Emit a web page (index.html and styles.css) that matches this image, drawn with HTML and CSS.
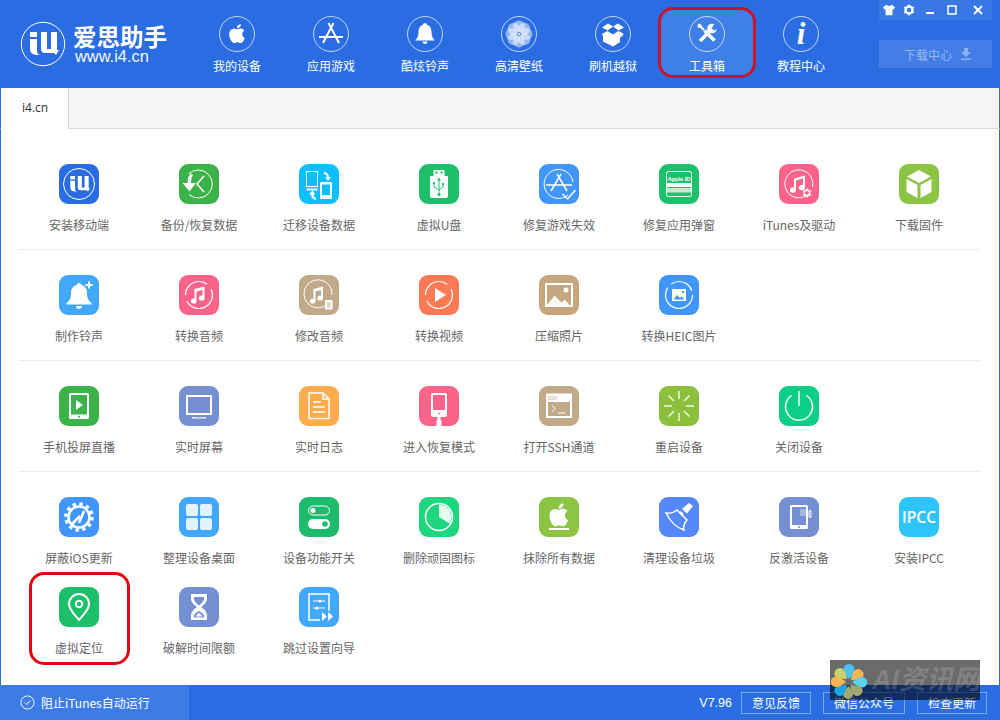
FILE: index.html
```html
<!DOCTYPE html>
<html lang="zh-CN">
<head>
<meta charset="utf-8">
<title>爱思助手</title>
<link rel="stylesheet" href="styles.css">
</head>
<body>
<div class="app">
  <header class="header">
    <div class="brand">
      <svg class="brand-logo" viewBox="0 0 46 46"><circle class="s logo-ring" cx="23" cy="23" r="21.700"/><path class="f" d="M10 11h7v5h-7zM10 18h7v12q0 3 3 4h-4q-6-1-6-6zM21 11h6v17h4V11h6v18h2l-3 5-2-2H25q-4 0-4-4z"/></svg>
      <div class="brand-text">
        <div class="brand-name">爱思助手</div>
        <div class="brand-url">www.i4.cn</div>
      </div>
    </div>
    <nav class="nav">
      <div class="nav-item">
        <svg class="nav-icon" viewBox="0 0 36 36"><circle class="ring" cx="18" cy="18" r="17.500"/><path class="f" transform="translate(6.500 6) scale(.96)" d="M18.710 19.500c-.83 1.240-1.710 2.450-3.050 2.470-1.340.03-1.770-.79-3.290-.79-1.530 0-2 .77-3.270.82-1.310.05-2.300-1.320-3.140-2.530C4.250 17 2.940 12.450 4.700 9.390c.87-1.520 2.430-2.480 4.120-2.510 1.280-.02 2.500.87 3.290.87.78 0 2.260-1.070 3.800-.91.65.03 2.470.26 3.640 1.980-.09.06-2.170 1.280-2.150 3.810.03 3.020 2.650 4.030 2.680 4.040-.03.07-.42 1.440-1.380 2.830M13 3.500c.73-.83 1.940-1.460 2.940-1.500.13 1.170-.34 2.350-1.040 3.190-.69.85-1.830 1.510-2.950 1.420-.15-1.150.41-2.350 1.050-3.110z"/></svg>
        <span>我的设备</span>
      </div>
      <div class="nav-item">
        <svg class="nav-icon" viewBox="0 0 36 36"><circle class="ring" cx="18" cy="18" r="17.500"/><path class="s w2" d="M20.500 7 10 27M15.500 7 26 27M6 21h8M22 21h8M12 21h12"/></svg>
        <span>应用游戏</span>
      </div>
      <div class="nav-item">
        <svg class="nav-icon" viewBox="0 0 36 36"><circle class="ring" cx="18" cy="18" r="17.500"/><path class="f" d="M18 7c-1.100 0-2 .8-2 1.800C12.500 10 11.500 13 11.500 16c0 4-1 6-3.500 8.500h20c-2.500-2.500-3.500-4.500-3.500-8.500 0-3-1-6-4.500-7.200C20 7.800 19.100 7 18 7zM15.500 25.500h5c0 1.500-1.100 2.500-2.500 2.500s-2.500-1-2.500-2.500z"/></svg>
        <span>酷炫铃声</span>
      </div>
      <div class="nav-item">
        <svg class="nav-icon" viewBox="0 0 36 36"><circle class="ring" cx="18" cy="18" r="17.500"/><g class="petal"><circle cx="18" cy="10.500" r="6"/><circle cx="23.300" cy="12.700" r="6"/><circle cx="25.500" cy="18" r="6"/><circle cx="23.300" cy="23.300" r="6"/><circle cx="18" cy="25.500" r="6"/><circle cx="12.700" cy="23.300" r="6"/><circle cx="10.500" cy="18" r="6"/><circle cx="12.700" cy="12.700" r="6"/></g><circle class="f" cx="18" cy="18" r="1"/></svg>
        <span>高清壁纸</span>
      </div>
      <div class="nav-item">
        <svg class="nav-icon" viewBox="0 0 36 36"><circle class="ring" cx="18" cy="18" r="17.500"/><path class="f" d="M7 11.500 13 7.500l5 3-5.500 4zM29 11.500l-6-4-5 3 5.500 4zM7 18l5.500-3 5.500 3.500 5.500-3.500 5.500 3-4 2.500v5.500L18 30.500l-10-5V20z"/><path class="s blue-line" d="M18 19v11M8 19.500l10 5.500 10-5.500"/></svg>
        <span>刷机越狱</span>
      </div>
      <div class="nav-item active">
        <svg class="nav-icon" viewBox="0 0 36 36"><circle class="ring" cx="18" cy="18" r="17.500"/><path class="s w35" d="M11 25l9.500-9.500"/><circle class="f" cx="23" cy="12.500" r="4.800"/><path class="notch" d="M22.500 12.500 25.500 7.500h4v3.500l-3.500 3.500z"/><path class="s w2" d="M10.500 9.500l4.500 4.500"/><path class="s w35" d="M15.500 14.500l10 10"/><path class="f" d="M8.500 9 10 7.500l2.500 1.500.5 2-1.500 1-2.500-.5z"/></svg>
        <span>工具箱</span>
      </div>
      <div class="nav-item">
        <svg class="nav-icon" viewBox="0 0 36 36"><circle class="ring" cx="18" cy="18" r="17.500"/><text class="info-i" x="18" y="28">i</text></svg>
        <span>教程中心</span>
      </div>
    </nav>
    <div class="controls">
      <div class="winbar">
        <div class="wincell c20"><svg viewBox="0 0 14 12" class="win-icon"><path class="f" d="M4 0 0 2.500l1.500 3L3 5v7h8V5l1.500.5 1.500-3L10 0 7 1.500z"/></svg></div>
        <div class="wincell c20"><svg viewBox="0 0 12 12" class="win-icon"><circle class="s w25" cx="6" cy="6" r="3.500"/><path class="s w15" d="M6 .5v2M6 9.500v2M1.200 3.200l1.700 1M9.100 7.800l1.700 1M1.200 8.800l1.700-1M9.100 4.200l1.700-1"/></svg></div>
        <div class="wincell c22"><svg viewBox="0 0 12 12" class="win-icon"><rect class="f" x="2" y="8" width="8" height="2"/></svg></div>
        <div class="wincell c22"><svg viewBox="0 0 12 12" class="win-icon"><rect class="s w15" x="2" y="2" width="8" height="8"/></svg></div>
        <div class="wincell c29"><svg viewBox="0 0 12 12" class="win-icon"><path class="s w2" d="M2 2l8 8M10 2l-8 8"/></svg></div>
      </div>
      <div class="download">
        <span>下载中心</span>
        <svg viewBox="0 0 12 12" class="dl-icon"><path class="dl" d="M4 0h4v4h3L6 9 1 4h3zM1 10.500h10V12H1z"/></svg>
      </div>
    </div>
  </header>

  <div class="tabbar"><div class="tab">i4.cn</div></div>

  <main class="main">
    <section class="section first">
      <div class="grid">
        <div class="tool"><svg class="icon b-blue" viewBox="0 0 40 40"><circle class="s" cx="20" cy="20" r="15.500"/><path class="f" transform="translate(4.500 4.500) scale(.68)" d="M10 11h7v5h-7zM10 18h7v12q0 3 3 4h-4q-6-1-6-6zM21 11h6v17h4V11h6v18h2l-3 5-2-2H25q-4 0-4-4z"/></svg><span>安装移动端</span></div>
        <div class="tool"><svg class="icon b-green" viewBox="0 0 40 40"><path class="s" d="M10 9.500A14 14 0 1 1 10 30.500"/><path class="f" d="M3.500 19h5c0-4 1-7 3-9.500l2.500 1.500c-1.500 2.500-2 5-2 8h5l-6.500 8.500z"/><path class="s w15" d="M25 12l-7 8 7 8"/></svg><span>备份/恢复数据</span></div>
        <div class="tool"><svg class="icon b-cyan" viewBox="0 0 40 40"><rect class="s" x="7.500" y="7.500" width="11" height="15"/><path class="s w2" d="M7.500 25.500h11"/><rect class="f" x="21" y="18" width="12" height="17" rx="1.500"/><rect class="cy" x="23" y="20.500" width="8" height="10.500"/><path class="f" d="M25 7.500l2 1c2 1 3 2.500 3 4.500h2l-3 4-3-4h2c0-1.500-1-2.500-3-3zM17 36l-2-.5c-2-1-3-3-3-5h-2l3.500-4 3 4h-2c0 1.500.5 2.500 2.500 3.500z"/></svg><span>迁移设备数据</span></div>
        <div class="tool"><svg class="icon b-usb" viewBox="0 0 40 40"><path class="f" d="M14.500 6h11v6h-11zM11 12h18v20a2 2 0 0 1-2 2H13a2 2 0 0 1-2-2z"/><path class="u-line" d="M20 16v14M15 20v3l5 3 4-3v-2"/><rect class="u-fill" x="16.500" y="7.500" width="2" height="2"/><rect class="u-fill" x="21.500" y="7.500" width="2" height="2"/><circle class="u-fill" cx="20" cy="30.500" r="1.500"/><path class="u-fill" d="M20 13.500l2 3h-4zM14 18h2v2h-2zM23 19h2v2h-2z"/></svg><span>虚拟U盘</span></div>
        <div class="tool"><svg class="icon b-blue2" viewBox="0 0 40 40"><path class="s" d="M29 31A14.500 14.500 0 1 1 34 18"/><path class="s w15" d="M22 10 12 27M18 10l10 17M7 21h26"/><path class="s w15 check" d="M23.500 30l5 5 8-9"/></svg><span>修复游戏失效</span></div>
        <div class="tool"><svg class="icon b-teal" viewBox="0 0 40 40"><rect class="s" x="7.500" y="7.500" width="25" height="25" rx="2"/><text class="appleid" x="20" y="17">Apple ID</text><rect class="f" x="8" y="19" width="24" height="4"/><rect class="f tr" x="8" y="24" width="24" height="4.500"/></svg><span>修复应用弹窗</span></div>
        <div class="tool"><svg class="icon b-pink" viewBox="0 0 40 40"><path class="s" d="M30 29.500A14 14 0 1 1 33.500 23"/><path class="f" d="M15 14.500l11-3v12a3 2.600 0 1 1-2-2.400v-6.500l-7 2V26a3 2.600 0 1 1-2-2.400z"/><circle class="s w15" cx="28" cy="29" r="2.800"/><path class="s" d="M28 24v2M28 32v2M23.700 26.500l1.700 1M30.600 30.500l1.700 1M23.700 31.500l1.700-1M30.600 27.500l1.700-1"/></svg><span>iTunes及驱动</span></div>
        <div class="tool"><svg class="icon b-lime" viewBox="0 0 40 40"><path class="f" d="M20 6l12 6.500L20 19 8 12.500zM7.500 15l11 6v13l-11-6zM32.500 15v13l-11 6V21z"/></svg><span>下载固件</span></div>
      </div>
    </section>

    <section class="section">
      <div class="grid">
        <div class="tool"><svg class="icon b-sky" viewBox="0 0 40 40"><path class="f" d="M20 8c-1.200 0-2 .8-2 1.800-4 1-6 4.200-6 8.200 0 5-1.500 8-4.500 10v1.500h25V28c-3-2-4.500-5-4.500-10 0-4-2-7.200-6-8.200 0-1-.8-1.800-2-1.800zM17 31h6c0 1.800-1.300 3-3 3s-3-1.200-3-3z"/><path class="s w2" d="M30 6.500v7M26.500 10h7"/></svg><span>制作铃声</span></div>
        <div class="tool"><svg class="icon b-pink" viewBox="0 0 40 40"><circle class="s dash" cx="20" cy="20" r="13.500"/><path class="f" d="M15.500 14l10-2.500v11.500a2.800 2.500 0 1 1-2-2.300v-5.700l-6 1.500V26a2.800 2.500 0 1 1-2-2.300z"/></svg><span>转换音频</span></div>
        <div class="tool"><svg class="icon b-tan" viewBox="0 0 40 40"><path class="s" d="M26 31A14 14 0 1 1 33 20"/><path class="f" d="M14.500 14l9.500-2.500v11.500a2.800 2.500 0 1 1-2-2.300v-5.700l-5.500 1.500V26a2.800 2.500 0 1 1-2-2.300z"/><path class="f" d="M26 25h6.500a1 1 0 0 1 1 1v8.500H26z"/><path class="tan-line" d="M28 28h3.500M28 30h3.500M28 32h3.500"/></svg><span>修改音频</span></div>
        <div class="tool"><svg class="icon b-orange" viewBox="0 0 40 40"><circle class="s dash" cx="20" cy="20" r="13.500"/><path class="f" d="M16 13l11 7-11 7z"/></svg><span>转换视频</span></div>
        <div class="tool"><svg class="icon b-khaki" viewBox="0 0 40 40"><rect class="s w2" x="7" y="9" width="26" height="22"/><circle class="f" cx="27" cy="15" r="2.500"/><path class="f tr2" d="M7.500 30.500l8-10 7 7 3-3 6 6z"/></svg><span>压缩照片</span></div>
        <div class="tool"><svg class="icon b-blue2" viewBox="0 0 40 40"><circle class="s dash2" cx="20" cy="20" r="13.500"/><rect class="f" x="13" y="14" width="14" height="12"/><path class="blue-fill" d="M14.500 24.500l3.500-4.500 3 3 1.500-1.500 3 3zM23 16h2v2h-2z"/></svg><span>转换HEIC图片</span></div>
        <div class="tool empty"></div>
        <div class="tool empty"></div>
      </div>
    </section>

    <section class="section">
      <div class="grid">
        <div class="tool"><svg class="icon b-green" viewBox="0 0 40 40"><rect class="f" x="10" y="7" width="20" height="26" rx="1.500"/><rect class="gr" x="12" y="9" width="16" height="19.500"/><path class="f" d="M17 14l7 5-7 5z"/><circle class="gr" cx="20" cy="30.700" r="1"/></svg><span>手机投屏直播</span></div>
        <div class="tool"><svg class="icon b-slate" viewBox="0 0 40 40"><rect class="s w2" x="8" y="10" width="24" height="18"/><path class="f" d="M13 31c4 .6 10 .6 14 0v1.500H13z"/></svg><span>实时屏幕</span></div>
        <div class="tool"><svg class="icon b-amber" viewBox="0 0 40 40"><path class="s w15" d="M10 7h14l6 6v19.500H10zM24 7v6h6"/><path class="s w15" d="M14 16h8M14 21h12M14 26h12"/></svg><span>实时日志</span></div>
        <div class="tool"><svg class="icon b-pink" viewBox="0 0 40 40"><rect class="f" x="12" y="7" width="16" height="24" rx="2"/><rect class="pk" x="14" y="9" width="12" height="15"/><circle class="pk" cx="20" cy="27.500" r="1"/><path class="f" d="M18.500 31h3v3l1 .5V40h-5v-5.500l1-.5z"/></svg><span>进入恢复模式</span></div>
        <div class="tool"><svg class="icon b-tan" viewBox="0 0 40 40"><rect class="f" x="7" y="7.500" width="26" height="24.500"/><rect class="tn" x="9" y="16" width="22" height="14"/><text class="ssh" x="9" y="14">SSH</text><path class="s" d="M13 19.500l3.500 3-3.500 3"/><path class="s" d="M19 27h7"/></svg><span>打开SSH通道</span></div>
        <div class="tool"><svg class="icon b-olive" viewBox="0 0 40 40"><path class="s w15 fade" d="M20 5v8M20 27v8M5 20h8M27 20h8M9.500 9.500l5.500 5.500M25 25l5.500 5.500M9.500 30.500l5.500-5.500M25 15l5.500-5.500"/></svg><span>重启设备</span></div>
        <div class="tool"><svg class="icon b-mint" viewBox="0 0 40 40"><path class="s w15" d="M12.500 9.500a13.500 13.500 0 1 0 15 0"/><path class="s w15" d="M20 5v15"/></svg><span>关闭设备</span></div>
        <div class="tool empty"></div>
      </div>
    </section>

    <section class="section last">
      <div class="grid">
        <div class="tool"><svg class="icon b-blue2" viewBox="0 0 40 40"><circle class="s w35 cog" cx="20" cy="20" r="13"/><circle class="s w25" cx="20" cy="20" r="10.500"/><path class="s w25" d="M13 27l8-8M20 26l5-12"/></svg><span>屏蔽iOS更新</span></div>
        <div class="tool"><svg class="icon b-sky" viewBox="0 0 40 40"><g class="tile"><rect x="7" y="7" width="12" height="12" rx="2"/><rect x="21" y="7" width="12" height="12" rx="2"/><rect x="7" y="21" width="12" height="12" rx="2"/><rect x="21" y="21" width="12" height="12" rx="2"/></g></svg><span>整理设备桌面</span></div>
        <div class="tool"><svg class="icon b-usb2" viewBox="0 0 40 40"><rect class="s" x="9.500" y="9" width="21" height="9" rx="4.500"/><circle class="f" cx="14" cy="13.500" r="2.500"/><rect class="f" x="9" y="22" width="22" height="10" rx="5"/><circle class="us" cx="26" cy="27" r="2.800"/></svg><span>设备功能开关</span></div>
        <div class="tool"><svg class="icon b-jade" viewBox="0 0 40 40"><circle class="s w15" cx="20" cy="20" r="13.500"/><path class="f tr2" d="M20 7.500A12.500 12.500 0 0 1 30.500 26.500L20 20z"/></svg><span>删除顽固图标</span></div>
        <div class="tool"><svg class="icon b-lime" viewBox="0 0 40 40"><path class="f" transform="translate(6 4) scale(1.150)" d="M18.710 19.500c-.83 1.240-1.710 2.450-3.050 2.470-1.340.03-1.770-.79-3.290-.79-1.530 0-2 .77-3.270.82-1.310.05-2.300-1.320-3.140-2.530C4.250 17 2.940 12.450 4.700 9.390c.87-1.520 2.430-2.480 4.120-2.510 1.280-.02 2.500.87 3.290.87.78 0 2.260-1.070 3.800-.91.65.03 2.470.26 3.640 1.980-.09.06-2.170 1.280-2.150 3.810.03 3.020 2.650 4.030 2.680 4.040-.03.07-.42 1.440-1.380 2.830M13 3.500c.73-.83 1.940-1.460 2.940-1.500.13 1.170-.34 2.350-1.040 3.190-.69.85-1.830 1.510-2.950 1.420-.15-1.150.41-2.350 1.050-3.110z"/><rect class="f" x="10" y="31" width="20" height="2"/></svg><span>抹除所有数据</span></div>
        <div class="tool"><svg class="icon b-indigo" viewBox="0 0 40 40"><path class="s w15" d="M7 16c4 1 8-.5 11-3l10 10c-2.500 3-4 7-3 10-7-2-14-9-18-17z"/><path class="s w25" d="M21 15l3 3"/><path class="f" d="M23 12l7-6 4 3-6 7.500z"/></svg><span>清理设备垃圾</span></div>
        <div class="tool"><svg class="icon b-slate" viewBox="0 0 40 40"><rect class="f" x="11" y="8" width="18" height="24" rx="1.500"/><rect class="sl" x="13" y="10" width="14" height="18"/><path class="f tr3" d="M21 12h6v7h-6z"/><path class="s" d="M30 14v6l2 .5v-7z"/><circle class="sl" cx="20" cy="30" r="1"/></svg><span>反激活设备</span></div>
        <div class="tool"><svg class="icon b-ipcc" viewBox="0 0 40 40"><text class="ipcc" x="20" y="26">IPCC</text></svg><span>安装IPCC</span></div>
        <div class="tool marked"><svg class="icon b-usb" viewBox="0 0 40 40"><path class="s w2" d="M20 33c-4-5-10-10-10-16a10 10 0 0 1 20 0c0 6-6 11-10 16z"/><circle class="s w2" cx="20" cy="17" r="3.200"/></svg><span>虚拟定位</span></div>
        <div class="tool"><svg class="icon b-slate" viewBox="0 0 40 40"><path class="f" d="M12 7h16v5c0 3-3 6-6 8 3 2 6 5 6 8v5H12v-5c0-3 3-6 6-8-3-2-6-5-6-8z"/><path class="sl" d="M15 10h10v2c0 2-3 5-5 6.500-2-1.500-5-4.500-5-6.500zM20 24c-2 1-5 3-5 5v1.500h10V29c0-2-3-4-5-5z"/><path class="f" d="M17 29.500c0-1.500 2-3 3-3.500 1 .5 3 2 3 3.500z"/></svg><span>破解时间限额</span></div>
        <div class="tool"><svg class="icon b-sky" viewBox="0 0 40 40"><path class="s w15" d="M30 24V7H10v26h11"/><path class="s" d="M14 14h12M14 21h12"/><circle class="f" cx="21" cy="14" r="1.600"/><circle class="f" cx="18" cy="21" r="1.600"/><path class="f" d="M23 25l5 4.500-5 4.500zM29 25l5 4.500-5 4.500z"/></svg><span>跳过设置向导</span></div>
      </div>
    </section>
  </main>

  <footer class="footer">
    <div class="autorun">
      <svg viewBox="0 0 16 16" class="check-icon"><circle class="s" cx="8" cy="8" r="7"/><path class="s" d="M5 8l2.200 2.300L11 5.800"/></svg>
      <span>阻止iTunes自动运行</span>
    </div>
    <div class="footer-right">
      <span class="version">V7.96</span>
      <div class="fbtn w70">意见反馈</div>
      <div class="fbtn w82">微信公众号</div>
      <div class="fbtn w70">检查更新</div>
    </div>
  </footer>

  <div class="watermark">
    <svg class="wm-logo" viewBox="0 0 38 38">
      <path class="p1" d="M19 17c-4-4-5.500-6-5.500-9.500a5.500 5.500 0 0 1 11 0c0 3.500-1.500 5.500-5.500 9.500z"/>
      <path class="p2" d="M21 18c1-5 2-8 4-10a5.500 5.500 0 0 1 8 7c-2 2-6 3-12 3z"/>
      <path class="p3" d="M22 20c4-3 6-5 10-5a5.200 5.200 0 0 1 0 10.400c-4 0-6-2.400-10-5.400z"/>
      <path class="p4" d="M20 23c6 0 10 1 12 3a5.500 5.500 0 0 1-8 7c-2-2-3-5-4-10z"/>
      <path class="p5" d="M18.500 24c3 4 4.500 5 4.500 8a5 5 0 0 1-10 0c0-3 2-4 5.500-8z"/>
      <path class="p6" d="M17 23c-1 5-2 8-4 10a5.500 5.500 0 0 1-8-7c2-2 6-3 12-3z"/>
      <path class="p7" d="M16 20c-4 3-6 5-10 5a5.200 5.200 0 0 1 0-10.400c4 0 6 2.400 10 5.400z"/>
      <path class="p8" d="M17 17c-6 0-10-1-12-3a5.500 5.500 0 0 1 8-7c2 2 3 5 4 10z"/>
    </svg>
    <span class="wm-text">AI资讯网</span>
  </div>
</div>
</body>
</html>
```

FILE: styles.css
```css
* { box-sizing: border-box; }
html, body { margin: 0; padding: 0; }
body { font-family: "Noto Sans CJK SC", "Liberation Sans", sans-serif; font-size: 12px; }

.app { position: relative; width: 1000px; height: 720px; display: flex; flex-direction: column; overflow: hidden; background: #fff; }

/* Header */
.header { height: 88px; flex: none; background: #2a6de3; display: flex; color: #fff; }
.brand { width: 190px; flex: none; display: flex; padding: 21px 0 0 20px; }
.brand-logo { width: 46px; height: 46px; flex: none; }
.logo-ring { stroke-width: 2.6; }
.brand-text { margin-left: 7px; }
.brand-name { font-size: 23.5px; font-weight: 700; line-height: 24px; margin-top: 3px; white-space: nowrap; }
.brand-url { font-family: "Liberation Sans", sans-serif; font-size: 16.4px; line-height: 17px; margin-left: 2px; opacity: .95; }

.nav { display: flex; margin-top: 8px; height: 68px; }
.nav-item { position: relative; width: 94px; display: flex; flex-direction: column; align-items: center; padding-top: 8px; }
.nav-item span { line-height: 20px; margin-top: 4px; }
.nav-icon { width: 36px; height: 36px; display: block; }
.nav-item.active { background: #3f7fe8; border-radius: 12px; }
.nav-item.active::after { content: ""; position: absolute; left: -2px; right: -2px; top: -1px; bottom: -2px; border: 3px solid #cd1227; border-radius: 15px; }
.ring { fill: none; stroke: #fff; stroke-opacity: .7; stroke-width: 1; }
.notch { fill: #3f7fe8; }
.blue-line { stroke: #2a6de3; stroke-width: 1; }
.petal circle { fill: #fff; fill-opacity: .5; }
.info-i { font-family: "Liberation Serif", serif; font-style: italic; font-weight: 700; font-size: 31px; fill: #fff; text-anchor: middle; }

.controls { margin-left: auto; margin-right: 8px; width: 113px; flex: none; }
.winbar { height: 20px; display: flex; background: rgba(255, 255, 255, .07); }
.wincell { display: flex; align-items: center; justify-content: center; }
.c20 { width: 20px; }
.c22 { width: 22px; }
.c29 { width: 29px; }
.win-icon { width: 12px; height: 12px; display: block; }
.download { margin-top: 20px; height: 28px; background: rgba(255, 255, 255, .12); display: flex; align-items: center; padding-left: 25px; color: rgba(255, 255, 255, .45); }
.dl-icon { width: 12px; height: 12px; margin-left: 8px; }
.dl { fill: #fff; fill-opacity: .4; }

/* Tabs */
.tabbar { height: 41px; flex: none; background: #f4f5f6; border-left: 1px solid #2a6de3; border-right: 1px solid #2a6de3; border-bottom: 1px solid #d8dade; }
.tab { width: 68px; height: 41px; background: #fff; border-right: 1px solid #d8dade; line-height: 40px; padding-left: 21px; color: #333; font-family: "Open Sans", "Liberation Sans", sans-serif; }

/* Main */
.main { flex: 1; border-left: 1px solid #2a6de3; border-right: 1px solid #2a6de3; padding: 10px 19px 0 18px; min-height: 0; }
.section { padding-top: 25px; border-bottom: 1px solid #ececec; }
.section.last { border-bottom: 0; }
.grid { display: grid; grid-template-columns: repeat(8, 120px); row-gap: 5px; }
.tool { position: relative; height: 85px; display: flex; flex-direction: column; align-items: center; color: #666; }
.tool span { line-height: 20px; margin-top: 11px; white-space: nowrap; }
.icon { width: 40px; height: 40px; display: block; border-radius: 9px; flex: none; }
.tool.marked::after { content: ""; position: absolute; left: 10px; right: 9px; top: -15px; bottom: 7px; border: 3px solid #e20613; border-radius: 15px; }

/* Icon tiles */
.b-blue { background: #2a6de3; }
.b-green { background: #3cb34a; }
.b-cyan { background: #0dbffe; }
.b-usb { background: #1dbf6b; }
.b-usb2 { background: #1dbb6b; }
.b-blue2 { background: #4196fb; }
.b-teal { background: #1cc16a; }
.b-pink { background: #fb6488; }
.b-lime { background: #8cc444; }
.b-sky { background: #41a8fb; }
.b-tan { background: #c2a98a; }
.b-orange { background: #fd7a56; }
.b-khaki { background: #c5a67f; }
.b-slate { background: #7590d2; }
.b-amber { background: #fdac4f; }
.b-olive { background: #8cc03c; }
.b-mint { background: #0ccf87; }
.b-jade { background: #1dd67d; }
.b-indigo { background: #5488fb; }
.b-ipcc { background: #2ec5fd; }

/* SVG paints */
.s { fill: none; stroke: #fff; stroke-width: 1; }
.f { fill: #fff; }
.w15 { stroke-width: 1.5; }
.w2 { stroke-width: 2; }
.w25 { stroke-width: 2.5; }
.w35 { stroke-width: 3.5; }
.w4 { stroke-width: 4; }
.dash { stroke-dasharray: 36 6 30 6 6 0; stroke-width: 1.2; }
.dash2 { stroke-dasharray: 50 5 25 5; stroke-width: 1.2; }
.fade { stroke-opacity: .85; }
.cog { stroke-dasharray: 3.4 3.4; }
.tr { fill-opacity: .7; }
.tr2 { fill-opacity: .9; }
.tr3 { fill-opacity: .35; }
.cy { fill: #0dbffe; }
.u-line { fill: none; stroke: #1dbf6b; stroke-width: 1; }
.u-fill { fill: #1dbf6b; }
.tan-line { fill: none; stroke: #c2a98a; stroke-width: 1; }
.blue-fill { fill: #4196fb; }
.gr { fill: #3cb34a; }
.pk { fill: #fb6488; }
.tn { fill: #c2a98a; }
.us { fill: #1dbb6b; }
.sl { fill: #7590d2; }
.tile rect { fill: #fff; fill-opacity: .85; }
.appleid { font-family: "Liberation Sans", sans-serif; font-size: 5.600px; font-weight: 700; fill: #fff; text-anchor: middle; }
.ssh { font-family: "Liberation Sans", sans-serif; font-size: 4.500px; fill: #c2a98a; }
.ipcc { font-family: "Open Sans", "Liberation Sans", sans-serif; font-size: 15.500px; font-weight: 600; fill: #fff; text-anchor: middle; }

/* Footer */
.footer { height: 35px; flex: none; background: #2a6de3; display: flex; align-items: center; color: #fff; }
.autorun { width: 189px; height: 35px; background: #3d7ce6; display: flex; align-items: center; padding-left: 20px; }
.check-icon { width: 15px; height: 15px; flex: none; }
.autorun span { margin-left: 6px; white-space: nowrap; }
.footer-right { margin-left: auto; margin-right: 13px; display: flex; align-items: center; }
.version { font-family: "Liberation Sans", sans-serif; font-size: 12.5px; margin-right: 9px; }
.fbtn { height: 22px; border: 1px solid #7aa5f0; line-height: 20px; text-align: center; margin-left: 12px; }
.version + .fbtn { margin-left: 0; }
.w70 { width: 70px; }
.w82 { width: 82px; }

/* Watermark lying over the window */
.watermark { position: absolute; left: 830px; top: 660px; width: 150px; height: 40px; background: rgba(0, 0, 0, .58); display: flex; align-items: center; overflow: hidden; }
.wm-logo { width: 38px; height: 38px; flex: none; margin-top: 2px; }
.wm-text { margin-left: 4px; font-family: "Liberation Sans", "Noto Sans CJK SC", sans-serif; font-size: 27px; font-weight: 700; font-style: italic; line-height: 36px; color: rgba(255, 255, 255, .16); white-space: nowrap; }
.p1 { fill: #4fc3f0; }
.p2 { fill: #f5b64f; }
.p3 { fill: #5dd3ef; }
.p4 { fill: #a3a86e; }
.p5 { fill: #a3a86e; }
.p6 { fill: #1fa6e6; }
.p7 { fill: #f5b64f; }
.p8 { fill: #c9d36a; }
```
